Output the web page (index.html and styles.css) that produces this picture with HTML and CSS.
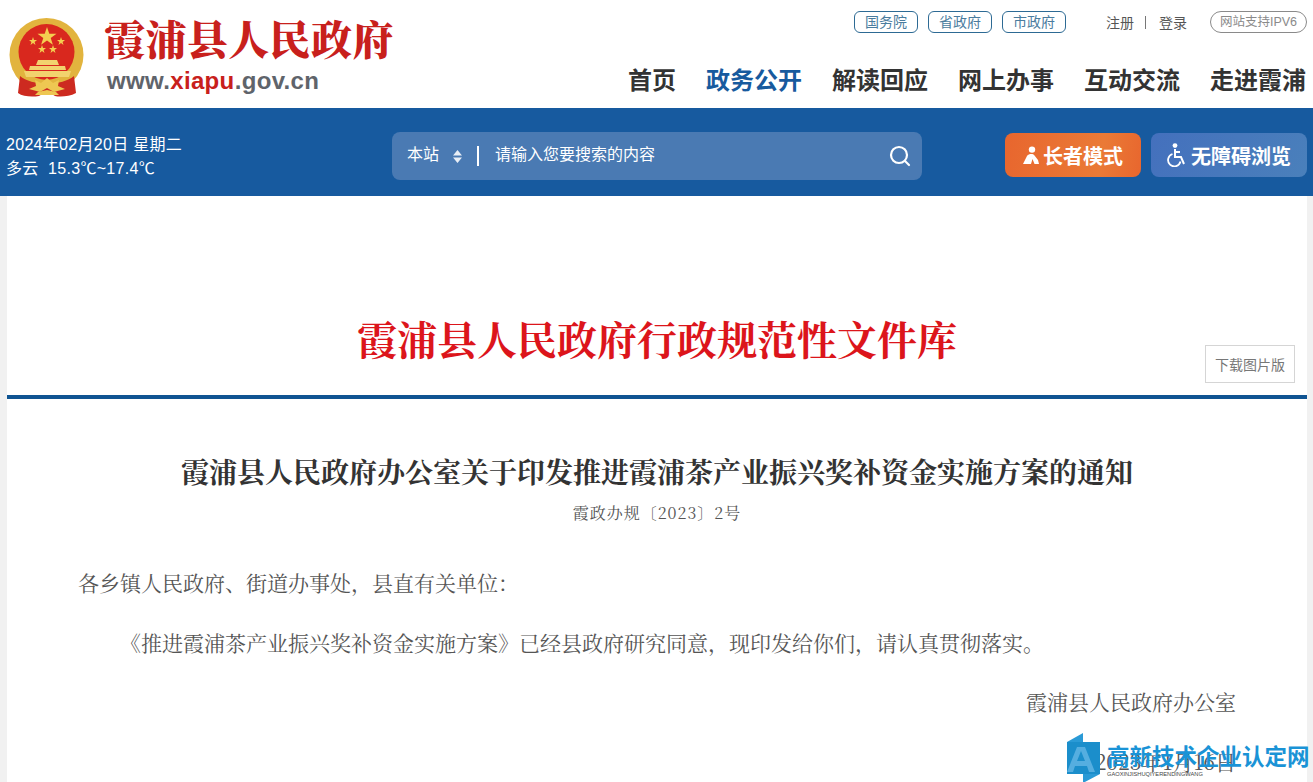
FILE: index.html
```html
<!DOCTYPE html>
<html lang="zh-CN">
<head>
    <meta charset="UTF-8">
    <title>霞浦县人民政府行政规范性文件库</title>
    <link rel="stylesheet" href="styles.css">
</head>
<body>
    <header class="top">
        <div class="brand">
            <svg class="emblem" viewBox="0 0 76 80" width="76" height="80">
                <circle cx="37.5" cy="37" r="37" fill="#e2b43e"/>
                <circle cx="37.5" cy="34" r="28" fill="#d9281e"/>
                <polygon points="38,9 40.3,15.8 47.5,15.8 41.7,20 43.9,26.8 38,22.6 32.1,26.8 34.3,20 28.5,15.8 35.7,15.8" fill="#f4cf50"/>
                <polygon points="24,19 25,22 28,22 25.6,23.9 26.5,27 24,25.1 21.5,27 22.4,23.9 20,22 23,22" fill="#f4cf50"/>
                <polygon points="52,19 53,22 56,22 53.6,23.9 54.5,27 52,25.1 49.5,27 50.4,23.9 48,22 51,22" fill="#f4cf50"/>
                <polygon points="33,27 34,30 37,30 34.6,31.9 35.5,35 33,33.1 30.5,35 31.4,31.9 29,30 32,30" fill="#f4cf50"/>
                <polygon points="44,27 45,30 48,30 45.6,31.9 46.5,35 44,33.1 41.5,35 42.4,31.9 40,30 43,30" fill="#f4cf50"/>
                <path d="M29 42 H48 L50 47 H27 Z M21 48 H56 L57 52 H20 Z M15 53 H62 L60 59 H17 Z" fill="#f2d36e"/>
                <path d="M11 58 C22 68 54 68 65 58 L67 75 C60 79 50 79 46 78 L38 73 L30 78 C24 79 14 79 9 75 Z" fill="#cd2a20"/>
                <path d="M26 62 L32 65 L38 60 L44 65 L50 62 L49 68 L56 71 L45 74 L38 70 L31 74 L20 71 L27 68 Z" fill="#eec752"/>
                <path d="M26 77 H50 L47 74 L38 72 L29 74 Z" fill="#eec752"/>
            </svg>
            <div class="brand-text">
                <div class="brand-name">霞浦县人民政府</div>
                <div class="brand-url">www.<span class="brand-url-red">xiapu</span>.gov.cn</div>
            </div>
        </div>
        <div class="top-right">
            <div class="top-links">
                <a class="pill">国务院</a>
                <a class="pill">省政府</a>
                <a class="pill">市政府</a>
                <div class="login">
                    <a>注册</a>
                    <span class="login-sep"></span>
                    <a>登录</a>
                </div>
                <span class="pill pill-grey">网站支持IPV6</span>
            </div>
            <nav class="nav">
                <a>首页</a>
                <a class="active">政务公开</a>
                <a>解读回应</a>
                <a>网上办事</a>
                <a>互动交流</a>
                <a>走进霞浦</a>
            </nav>
        </div>
    </header>

    <section class="band">
        <div class="weather">
            <div>2024年02月20日 星期二</div>
            <div>多云&nbsp;&nbsp;15.3℃~17.4℃</div>
        </div>
        <div class="search">
            <span class="search-scope">本站</span>
            <svg class="updown" viewBox="0 0 9 13" width="9" height="13">
                <path d="M4.5 0 L9 5.5 H0 Z M0 7.5 H9 L4.5 13 Z" fill="#e8eef6"/>
            </svg>
            <span class="search-sep"></span>
            <span class="search-hint">请输入您要搜索的内容</span>
            <svg class="search-icon" viewBox="0 0 22 22" width="22" height="22">
                <circle cx="10" cy="10" r="8" fill="none" stroke="#fff" stroke-width="2.2"/>
                <path d="M16 16 L20 20" stroke="#fff" stroke-width="2.2" stroke-linecap="round"/>
            </svg>
        </div>
        <div class="modes">
            <a class="mode mode-old">
                <svg viewBox="0 0 16 18" width="16" height="18">
                    <circle cx="9" cy="3.6" r="3.2" fill="#fff"/>
                    <path d="M0 18 L4 10 C6 7.5 10 7.5 11.5 9.5 L15 14 L16 18 H11.5 L9.5 13 L8 18 Z" fill="#fff"/>
                </svg>
                长者模式
            </a>
            <a class="mode mode-access">
                <svg viewBox="0 0 20 24" width="20" height="24">
                    <circle cx="8" cy="2.6" r="2.4" fill="#fff"/>
                    <path d="M8 6 V14 H14 L17 21 M8 9 H13" fill="none" stroke="#fff" stroke-width="2"/>
                    <path d="M5.5 11 A6.3 6.3 0 1 0 13.5 18.5" fill="none" stroke="#fff" stroke-width="1.8"/>
                </svg>
                无障碍浏览
            </a>
        </div>
    </section>

    <main class="page">
        <div class="lib-head">
            <h2 class="lib-title">霞浦县人民政府行政规范性文件库</h2>
            <a class="download">下载图片版</a>
        </div>
        <article class="doc">
            <h1 class="doc-title">霞浦县人民政府办公室关于印发推进霞浦茶产业振兴奖补资金实施方案的通知</h1>
            <div class="doc-no">霞政办规〔2023〕2号</div>
            <p>各乡镇人民政府、街道办事处，县直有关单位：</p>
            <p class="indent">《推进霞浦茶产业振兴奖补资金实施方案》已经县政府研究同意，现印发给你们，请认真贯彻落实。</p>
            <p class="sign">霞浦县人民政府办公室</p>
            <p class="sign">2023年1月16日</p>
        </article>
    </main>

    <div class="stamp">
        <svg class="stamp-logo" viewBox="0 0 36 50" width="36" height="50">
            <path d="M1 9 L17 0 V9 Z M17 41 H34 L17 50 Z" fill="#2a9ad6"/>
            <rect x="1" y="9" width="33" height="32" fill="#1b8ecb"/>
            <path d="M1 39 L11 14 H19 L29 39 H23 L21 33 H9 L7 39 Z M11 28 H19 L15 18 Z" fill="#55aee0"/>
        </svg>
        <div class="stamp-text">
            <div class="stamp-name">高新技术企业认定网</div>
            <div class="stamp-pinyin">GAOXINJISHUQIYERENDINGWANG</div>
        </div>
    </div>
</body>
</html>
```
FILE: styles.css
```css
* {
    margin: 0;
    padding: 0;
    box-sizing: border-box;
}

html {
    overflow: hidden;
}

body {
    height: 782px;
    overflow: hidden;
    background-color: #f1f1f1;
    color: #333;
    font-family: "Liberation Sans", "Noto Sans CJK SC", sans-serif;
    position: relative;
}

.top {
    height: 108px;
    background-color: #fff;
    display: flex;
    justify-content: space-between;
    padding: 10px 6px 0 9px;
}

.brand {
    display: flex;
    align-items: flex-start;
    padding-top: 8px;
}

.emblem {
    flex: none;
}

.brand-text {
    margin-left: 19px;
}

.brand-name {
    font-family: "Noto Serif CJK SC", "Noto Sans CJK SC", serif;
    font-size: 41px;
    font-weight: 900;
    line-height: 40px;
    letter-spacing: 0.4px;
    color: #c8201c;
}

.brand-url {
    margin: 10px 0 0 3px;
    font-size: 24px;
    font-weight: 700;
    line-height: 26px;
    letter-spacing: 0.35px;
    color: #5f646b;
}

.brand-url-red {
    color: #c8201c;
}

.top-right {
    display: flex;
    flex-direction: column;
    align-items: flex-end;
}

.top-links {
    display: flex;
    align-items: center;
    height: 24px;
    font-size: 14px;
}

.pill {
    height: 22px;
    width: 64px;
    margin-left: 10px;
    border: 1px solid #2d6a94;
    border-radius: 6px;
    color: #4a7c9e;
    line-height: 20px;
    text-align: center;
}

.pill-grey {
    width: 97px;
    border-color: #8a8a8a;
    border-radius: 11px;
    color: #8a8a8a;
    font-size: 12.5px;
}

.login {
    display: flex;
    align-items: center;
    margin: 0 13px 0 40px;
    color: #555;
}

.login-sep {
    width: 1px;
    height: 13px;
    margin: 0 13px 0 11px;
    background-color: #777;
}

.nav {
    display: flex;
    gap: 30px;
    margin: 29px 1px 0 0;
    font-size: 24px;
    font-weight: 700;
    line-height: 36px;
    color: #333;
}

.nav .active {
    color: #175a9e;
}

.band {
    height: 88px;
    background-color: #175a9f;
    display: flex;
    align-items: center;
    padding: 8px 6px 0;
    color: #fff;
}

.weather {
    width: 386px;
    margin-top: 2px;
    font-size: 16px;
    line-height: 24px;
    letter-spacing: 0.3px;
}

.search {
    width: 530px;
    height: 48px;
    display: flex;
    align-items: center;
    padding: 0 11px 0 15px;
    background-color: #4a7ab3;
    border-radius: 8px;
    font-size: 16px;
}

.search-scope,
.search-hint {
    line-height: 20px;
    margin-bottom: 3px;
}

.updown {
    margin-left: 14px;
}

.search-sep {
    width: 2px;
    height: 20px;
    margin: 0 16px 0 15px;
    background-color: #fff;
}

.search-hint {
    flex: 1;
}

.modes {
    display: flex;
    gap: 10px;
    margin: 0 0 2px auto;
}

.mode {
    height: 44px;
    display: flex;
    align-items: center;
    justify-content: center;
    gap: 4px;
    border-radius: 8px;
    font-size: 20px;
    font-weight: 700;
}

.mode-old {
    width: 136px;
    background: linear-gradient(100deg, #e8662e, #ea7a36 70%, #e8662e);
}

.mode-access {
    width: 156px;
    background: linear-gradient(120deg, #4470bd, #4a80bb);
}

.page {
    width: 1300px;
    height: 586px;
    margin-left: 7px;
    background-color: #fff;
    overflow: hidden;
}

.lib-head {
    height: 203px;
    border-bottom: 4px solid #0f5492;
    position: relative;
    text-align: center;
}

.lib-title {
    padding-top: 117px;
    font-family: "Noto Serif CJK SC", "Noto Sans CJK SC", serif;
    font-size: 40px;
    font-weight: 700;
    line-height: 50px;
    color: #dc151b;
}

.download {
    position: absolute;
    right: 12px;
    top: 149px;
    width: 90px;
    height: 38px;
    border: 1px solid #d5d5d5;
    color: #777;
    font-size: 14px;
    line-height: 38px;
}

.doc {
    padding: 0 71px;
    font-family: "Noto Serif CJK SC", "Noto Sans CJK SC", serif;
    color: #555;
}

.doc-title {
    margin-top: 52px;
    font-size: 28px;
    font-weight: 700;
    line-height: 40px;
    color: #333;
    text-align: center;
}

.doc-no {
    margin-top: 10px;
    font-size: 16px;
    line-height: 24px;
    letter-spacing: 1px;
    text-align: center;
    color: #555;
}

.doc p {
    margin-top: 21px;
    font-size: 21px;
    line-height: 38.5px;
}

.doc-no + p {
    margin-top: 38px;
}

.doc .indent {
    text-indent: 2em;
}

.doc .sign {
    text-align: right;
}

.stamp {
    position: absolute;
    left: 1066px;
    top: 733px;
    display: flex;
}

.stamp-logo {
    flex: none;
}

.stamp-text {
    margin: 13px 0 0 5px;
}

.stamp-name {
    font-size: 22.5px;
    font-weight: 700;
    line-height: 24px;
    color: #1a93d6;
    white-space: nowrap;
}

.stamp-pinyin {
    font-size: 5.7px;
    line-height: 8px;
    color: #444;
}
```
